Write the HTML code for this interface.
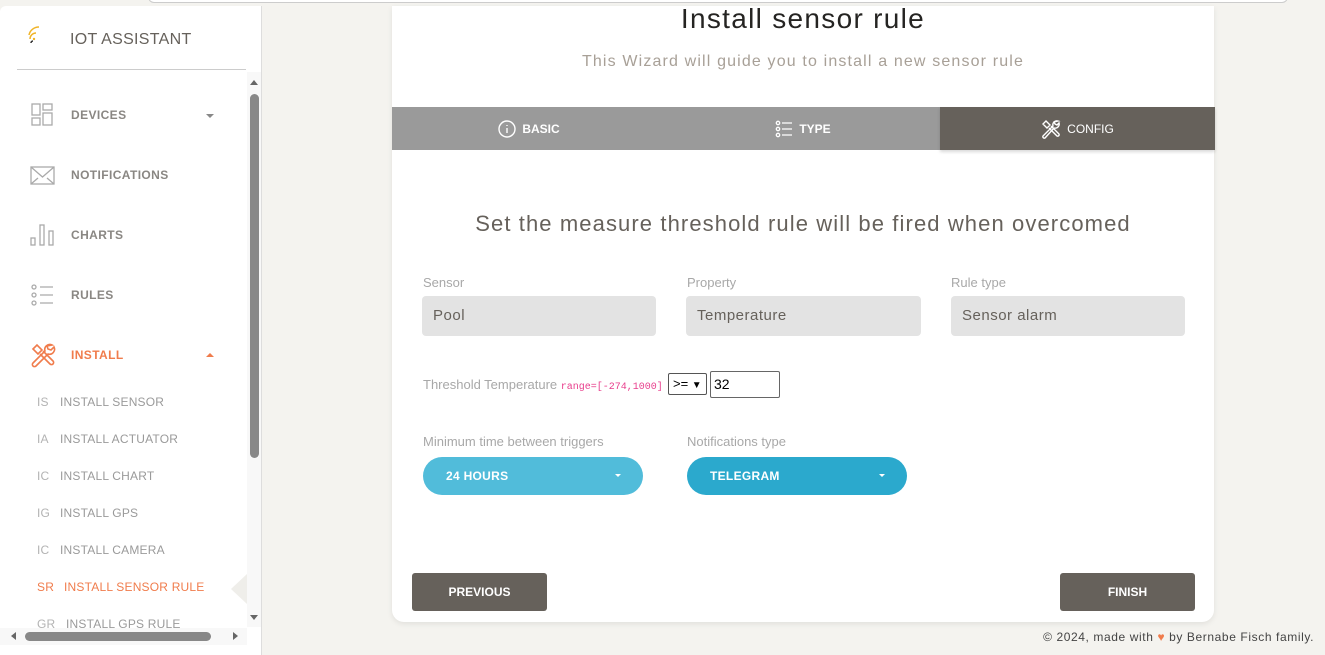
<!DOCTYPE html>
<html><head><meta charset="utf-8"><style>
*{box-sizing:border-box;margin:0;padding:0}
body{width:1325px;height:655px;overflow:hidden;background:#f4f3ef;font-family:"Liberation Sans",sans-serif;position:relative}
.a{position:absolute}
.side{left:0;top:6px;width:262px;height:649px;background:#fff;border-right:1px solid #ddd;border-radius:6px 0 0 0}
.nav{font-size:12px;font-weight:bold;color:#8a8783;letter-spacing:.4px}
.sub{font-size:12px;color:#9a9a9a;letter-spacing:.2px}
.sub b{font-weight:normal;display:inline-block;width:23px;color:#b3b3b3}
.card{left:392px;top:6px;width:822px;height:616px;background:#fff;border-radius:0 0 12px 12px;box-shadow:0 2px 6px rgba(0,0,0,.08)}
.tab{top:107px;height:43px;color:#fff;font-size:12px;font-weight:bold;display:flex;align-items:center;justify-content:center;gap:6px}
.lbl{font-size:13px;color:#a8a8a8}
.inp{height:40px;background:#e3e3e3;border-radius:4px;font-size:15px;color:#66615b;padding:11px 11px;letter-spacing:.5px}
.pill{height:38px;border-radius:19px;color:#fff;font-size:12px;font-weight:bold;padding:12px 23px;letter-spacing:.3px}
.pill i{position:absolute;right:22px;top:17px;border:3px solid transparent;border-top:3px solid #fff;border-bottom:0}
.btn{top:573px;width:135px;height:38px;background:#66615b;border-radius:3px;color:#fff;font-size:12px;font-weight:bold;text-align:center;line-height:38px}
</style></head><body>
<div class="a" style="left:148px;top:-6px;width:1140px;height:9px;border:1px solid #ccc;border-radius:0 0 6px 6px;background:#fff"></div>
<div class="a side"></div>
<svg class="a" style="left:27px;top:26px" width="22" height="22" viewBox="0 0 22 22" fill="none"><path d="M4 17a2 2 0 0 1 2-2" stroke="#333" stroke-width="1.5"/><path d="M3 13a6 6 0 0 1 6-6" stroke="#f0b429" stroke-width="1.5"/><path d="M2 9a10 10 0 0 1 10-8" stroke="#f0b429" stroke-width="1.5"/><circle cx="7" cy="13" r="1.2" fill="#f0b429"/></svg>
<div class="a" style="left:70px;top:31px;font-size:16px;color:#66615b;letter-spacing:.3px">IOT ASSISTANT</div>
<div class="a" style="left:17px;top:69px;width:229px;height:1px;background:#ccc"></div>
<div class="a" style="left:247px;top:72px;width:14px;height:555px;background:#f8f8f8"></div>
<div class="a" style="left:250px;top:94px;width:9px;height:364px;background:#888;border-radius:5px"></div>
<div class="a" style="left:250px;top:80px;border:4px solid transparent;border-bottom:5px solid #666;border-top:0"></div>
<div class="a" style="left:250px;top:615px;border:4px solid transparent;border-top:5px solid #666;border-bottom:0"></div>
<div class="a" style="left:0;top:628px;width:247px;height:17px;background:#f8f8f8"></div>
<div class="a" style="left:25px;top:632px;width:186px;height:9px;background:#888;border-radius:5px"></div>
<div class="a" style="left:11px;top:632px;border:4px solid transparent;border-right:5px solid #666;border-left:0"></div>
<div class="a" style="left:233px;top:632px;border:4px solid transparent;border-left:5px solid #666;border-right:0"></div>
<svg class="a" style="left:31px;top:103px" width="22" height="24" fill="none" stroke="#aaa" stroke-width="1.3"><rect x="1" y="1" width="8" height="11"/><rect x="12" y="1" width="9" height="6"/><rect x="1" y="15" width="8" height="7"/><rect x="12" y="10" width="9" height="12"/></svg>
<div class="a nav" style="left:71px;top:108px">DEVICES</div>
<div class="a" style="left:206px;top:114px;border:4px solid transparent;border-top:4px solid #888;border-bottom:0"></div>
<svg class="a" style="left:30px;top:166px" width="25" height="19" fill="none" stroke="#aaa" stroke-width="1.3"><rect x="1" y="1" width="23" height="17"/><path d="M1 1l11.5 10L24 1M1 18l7-6M24 18l-7-6"/></svg>
<div class="a nav" style="left:71px;top:168px">NOTIFICATIONS</div>
<svg class="a" style="left:30px;top:223px" width="25" height="24" fill="none" stroke="#aaa" stroke-width="1.3"><rect x="1" y="15" width="4" height="7"/><rect x="10" y="2" width="4" height="20"/><rect x="19" y="8" width="4" height="14"/></svg>
<div class="a nav" style="left:71px;top:228px">CHARTS</div>
<svg class="a" style="left:31px;top:284px" width="24" height="22" fill="none" stroke="#aaa" stroke-width="1.3"><circle cx="3" cy="3" r="2"/><circle cx="3" cy="11" r="2"/><circle cx="3" cy="19" r="2"/><path d="M9 3h13M9 11h13M9 19h13"/></svg>
<div class="a nav" style="left:71px;top:288px">RULES</div>
<svg class="a" style="left:30px;top:342px" width="26" height="26" fill="none" stroke="#f07c4c" stroke-width="1.6"><path d="M3 7l4-4 5 5-4 4zM10 12l10 10a2 2 0 0 0 3-3L13 9"/><path d="M22 3a5 5 0 0 0-7 6L3 21a2 2 0 0 0 3 3L18 12a5 5 0 0 0 6-7l-3 3-3-1-1-3z"/></svg>
<div class="a nav" style="left:71px;top:348px;color:#f07c4c">INSTALL</div>
<div class="a" style="left:206px;top:353px;border:4px solid transparent;border-bottom:4px solid #f07c4c;border-top:0"></div>
<div class="a sub" style="left:37px;top:395px"><b>IS</b>INSTALL SENSOR</div>
<div class="a sub" style="left:37px;top:432px"><b>IA</b>INSTALL ACTUATOR</div>
<div class="a sub" style="left:37px;top:469px"><b>IC</b>INSTALL CHART</div>
<div class="a sub" style="left:37px;top:506px"><b>IG</b>INSTALL GPS</div>
<div class="a sub" style="left:37px;top:543px"><b>IC</b>INSTALL CAMERA</div>
<div class="a sub" style="left:37px;top:580px;color:#f07c4c"><b style="color:#f07c4c;width:27px">SR</b>INSTALL SENSOR RULE</div>
<div class="a" style="left:231px;top:574px;border:15px solid transparent;border-right:16px solid #efeeea;border-left:0"></div>
<div class="a sub" style="left:37px;top:617px"><b style="width:29px">GR</b>INSTALL GPS RULE</div>
<div class="a card"></div>
<div class="a" style="left:392px;top:3px;width:822px;text-align:center;font-size:28px;color:#252422;letter-spacing:1.3px">Install sensor rule</div>
<div class="a" style="left:392px;top:53px;width:822px;text-align:center;font-size:16px;color:#a8a097;letter-spacing:1.15px">This Wizard will guide you to install a new sensor rule</div>
<div class="a tab" style="left:392px;width:274px;background:#9a9a9a"><svg width="18" height="18" fill="none" stroke="#fff" stroke-width="1.4"><circle cx="9" cy="9" r="8"/><path d="M9 8v5M9 5v1"/></svg>BASIC</div>
<div class="a tab" style="left:666px;width:274px;background:#9a9a9a"><svg width="18" height="18" fill="none" stroke="#fff" stroke-width="1.3"><circle cx="3" cy="3" r="1.7"/><circle cx="3" cy="9" r="1.7"/><circle cx="3" cy="15" r="1.7"/><path d="M7 3h10M7 9h10M7 15h10"/></svg>TYPE</div>
<div class="a tab" style="left:940px;width:275px;background:#66615b;font-weight:normal;box-shadow:0 2px 3px rgba(0,0,0,.15)"><svg width="20" height="20" fill="none" stroke="#fff" stroke-width="1.4"><path d="M2 5l3-3 4 4-3 3zM8 9l8 8a1.5 1.5 0 0 0 2-2L10 7"/><path d="M17 2a4 4 0 0 0-5 5L2 17a1.5 1.5 0 0 0 2 2L13 9a4 4 0 0 0 5-5l-2 2-2-1-1-2z"/></svg>CONFIG</div>
<div class="a" style="left:392px;top:211px;width:822px;text-align:center;font-size:22px;color:#66615b;letter-spacing:1.1px">Set the measure threshold rule will be fired when overcomed</div>
<div class="a lbl" style="left:423px;top:275px">Sensor</div>
<div class="a lbl" style="left:687px;top:275px">Property</div>
<div class="a lbl" style="left:951px;top:275px">Rule type</div>
<div class="a inp" style="left:422px;top:296px;width:234px">Pool</div>
<div class="a inp" style="left:686px;top:296px;width:235px">Temperature</div>
<div class="a inp" style="left:951px;top:296px;width:234px">Sensor alarm</div>
<div class="a lbl" style="left:423px;top:377px">Threshold Temperature <span style="font-family:'Liberation Mono',monospace;font-size:10px;color:#e83e8c">range=[-274,1000]</span></div>
<div class="a" style="left:668px;top:373px;width:39px;height:22px;border:1px solid #555;border-radius:2px;font-size:13px;padding:2px 4px;background:#fff">&gt;= <span style="font-size:10px">&#9660;</span></div>
<div class="a" style="left:710px;top:371px;width:70px;height:27px;border:1px solid #666;border-radius:2px;font-size:14px;padding:4px 3px;background:#fff">32</div>
<div class="a lbl" style="left:423px;top:434px">Minimum time between triggers</div>
<div class="a lbl" style="left:687px;top:434px">Notifications type</div>
<div class="a pill" style="left:423px;top:457px;width:220px;background:#51bcda">24 HOURS<i></i></div>
<div class="a pill" style="left:687px;top:457px;width:220px;background:#2ba9cd">TELEGRAM<i></i></div>
<div class="a btn" style="left:412px">PREVIOUS</div>
<div class="a btn" style="left:1060px">FINISH</div>
<div class="a" style="right:11px;top:630px;font-size:12px;color:#444;letter-spacing:.6px">© 2024, made with <span style="color:#f07c4c">♥</span> by Bernabe Fisch family.</div>
</body></html>
